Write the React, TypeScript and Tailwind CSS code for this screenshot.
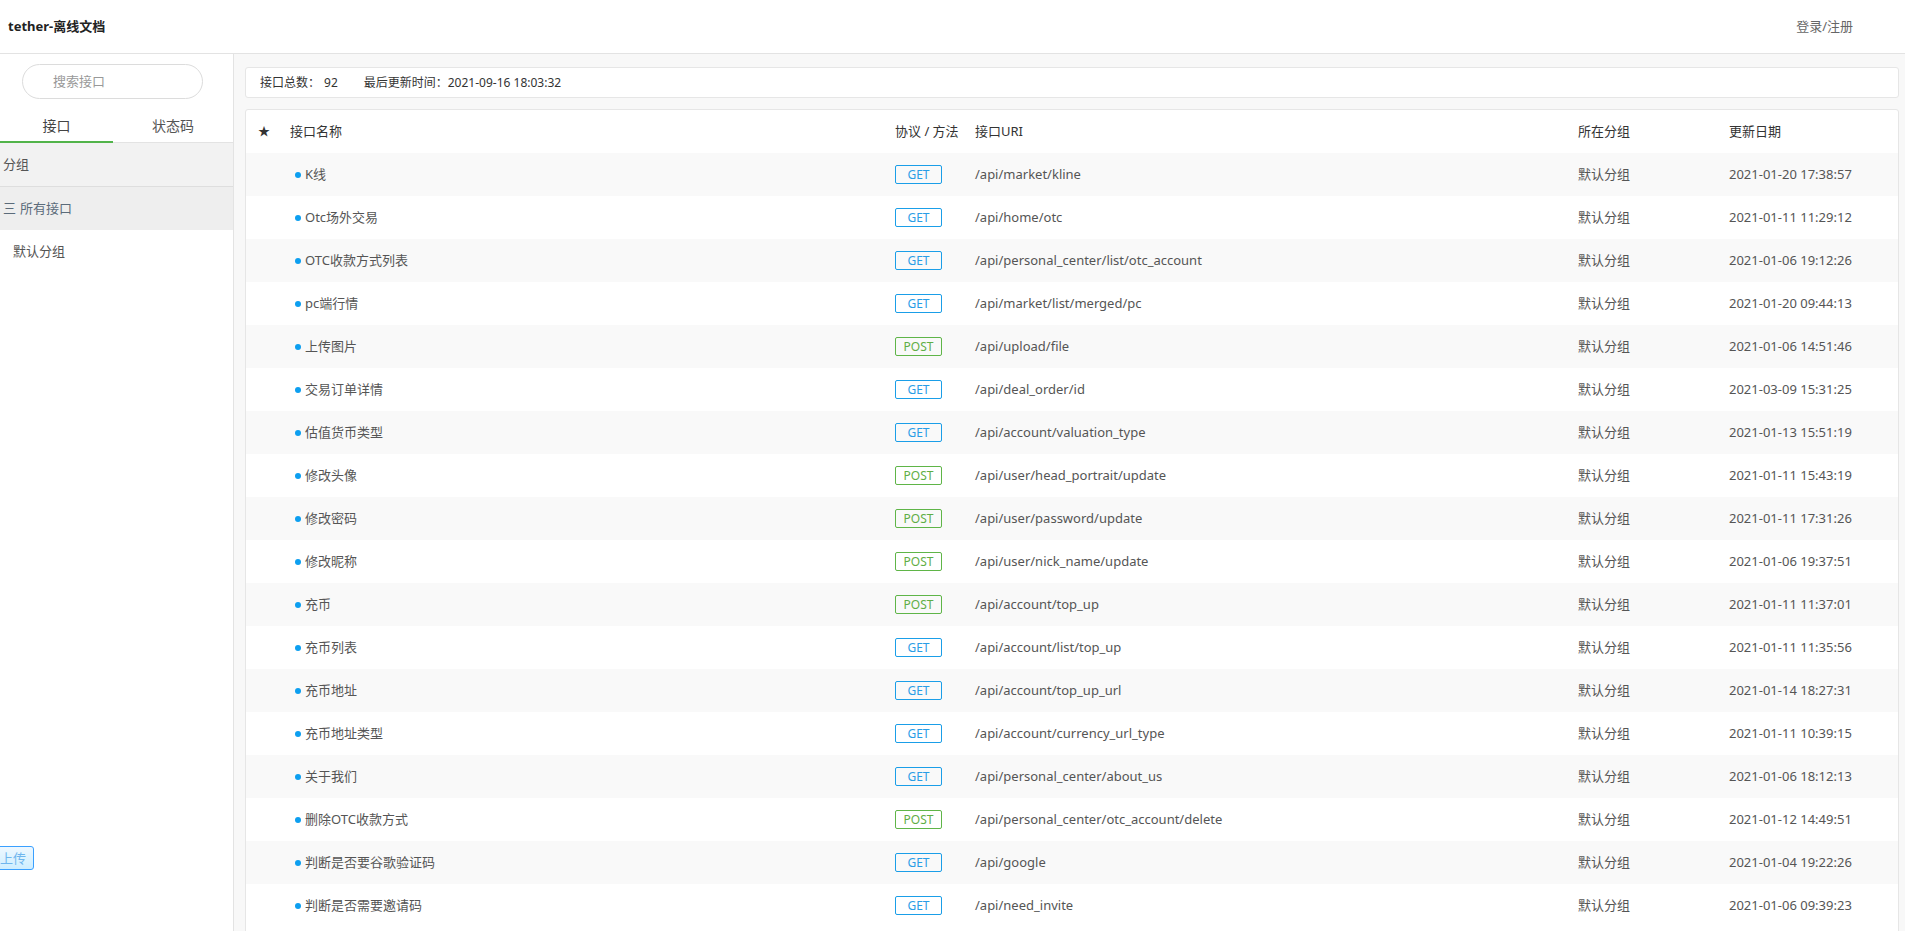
import React from 'react';

type Api = { name: string; method: 'GET' | 'POST'; uri: string; date: string };

const apis: Api[] = [
    { name: 'K线', method: 'GET', uri: '/api/market/kline', date: '2021-01-20 17:38:57' },
    { name: 'Otc场外交易', method: 'GET', uri: '/api/home/otc', date: '2021-01-11 11:29:12' },
    { name: 'OTC收款方式列表', method: 'GET', uri: '/api/personal_center/list/otc_account', date: '2021-01-06 19:12:26' },
    { name: 'pc端行情', method: 'GET', uri: '/api/market/list/merged/pc', date: '2021-01-20 09:44:13' },
    { name: '上传图片', method: 'POST', uri: '/api/upload/file', date: '2021-01-06 14:51:46' },
    { name: '交易订单详情', method: 'GET', uri: '/api/deal_order/id', date: '2021-03-09 15:31:25' },
    { name: '估值货币类型', method: 'GET', uri: '/api/account/valuation_type', date: '2021-01-13 15:51:19' },
    { name: '修改头像', method: 'POST', uri: '/api/user/head_portrait/update', date: '2021-01-11 15:43:19' },
    { name: '修改密码', method: 'POST', uri: '/api/user/password/update', date: '2021-01-11 17:31:26' },
    { name: '修改昵称', method: 'POST', uri: '/api/user/nick_name/update', date: '2021-01-06 19:37:51' },
    { name: '充币', method: 'POST', uri: '/api/account/top_up', date: '2021-01-11 11:37:01' },
    { name: '充币列表', method: 'GET', uri: '/api/account/list/top_up', date: '2021-01-11 11:35:56' },
    { name: '充币地址', method: 'GET', uri: '/api/account/top_up_url', date: '2021-01-14 18:27:31' },
    { name: '充币地址类型', method: 'GET', uri: '/api/account/currency_url_type', date: '2021-01-11 10:39:15' },
    { name: '关于我们', method: 'GET', uri: '/api/personal_center/about_us', date: '2021-01-06 18:12:13' },
    { name: '删除OTC收款方式', method: 'POST', uri: '/api/personal_center/otc_account/delete', date: '2021-01-12 14:49:51' },
    { name: '判断是否要谷歌验证码', method: 'GET', uri: '/api/google', date: '2021-01-04 19:22:26' },
    { name: '判断是否需要邀请码', method: 'GET', uri: '/api/need_invite', date: '2021-01-06 09:39:23' },
];

const cols = 'grid grid-cols-[44px_605px_80px_603px_151px_1fr] items-center';

const MethodBadge: React.FC<{ method: Api['method'] }> = ({ method }) => (
    <span
        className={`inline-flex items-center justify-center w-[47px] h-[19px] rounded-[2px] border text-[12px] leading-none ${
            method === 'GET' ? 'border-[#1a9ee8] text-[#2a9de6]' : 'border-[#5fb548] text-[#5fae45]'
        }`}
    >
        {method}
    </span>
);

const Sidebar: React.FC = () => (
    <aside className="w-[234px] shrink-0 bg-white border-r border-[#e3e3e3] flex flex-col overflow-hidden">
        {/* search */}
        <div className="pt-[10px] pl-[22px]">
            <div className="w-[181px] h-[35px] rounded-full border border-[#dcdcdc] flex items-center pl-[30px] text-[13px] text-[#999]">
                搜索接口
            </div>
        </div>

        {/* tabs */}
        <div className="mt-[10px] h-[34px] flex border-b border-[#e3e3e3] text-[14px]">
            <div className="w-[113px] flex items-center justify-center text-[#444] border-b-2 border-[#52b44b] -mb-px">接口</div>
            <div className="w-[120px] flex items-center justify-center text-[#555]">状态码</div>
        </div>

        <div className="h-[44px] flex items-center pl-[3px] bg-[#f2f2f2] border-b border-[#dedede] text-[13px] text-[#555]">分组</div>
        <div className="h-[43px] flex items-center pl-[3px] bg-[#eeeeee] text-[13px] text-[#5b6b7a]">
            <span className="mr-[4px]">三</span>所有接口
        </div>
        <div className="h-[43px] flex items-center pl-[13px] text-[13px] text-[#555]">默认分组</div>

        <div className="mt-auto mb-[61px]">
            <button className="-ml-[25px] h-[24px] pl-[24px] pr-[7px] rounded-[3px] border border-[#3aa0ff] bg-gradient-to-b from-[#eef8ff] to-[#cdeeff] text-[13px] text-[#6fb6ee] leading-none">
                上传
            </button>
        </div>
    </aside>
);

export default function App() {
    return (
        <div className="h-screen flex flex-col overflow-hidden bg-white font-['Noto_Sans','Noto_Sans_CJK_SC',sans-serif]">
            {/* Header */}
            <header className="h-[54px] shrink-0 flex items-center justify-between border-b border-[#e3e3e3] pl-[8px] pr-[52px]">
                <h1 className="text-[13px] font-bold text-[#222]">tether-离线文档</h1>
                <span className="text-[13px] text-[#666]">登录/注册</span>
            </header>

            <div className="flex flex-1 min-h-0">
                <Sidebar />

                <main className="flex-1 min-w-0 bg-[#f8f8f8] pt-[13px] pl-[11px] pr-[6px] overflow-hidden">
                    {/* summary */}
                    <div className="h-[31px] flex items-center bg-white border border-[#e6e6e6] rounded-[3px] pl-[14px] text-[12px] text-[#333]">
                        <span>接口总数：</span>
                        <span className="ml-[4px]">92</span>
                        <span className="ml-[26px]">最后更新时间：2021-09-16 18:03:32</span>
                    </div>

                    {/* table */}
                    <div className="mt-[11px] pb-[43px] bg-white border border-[#e6e6e6] rounded-[3px] text-[13px]">
                        <div className={`${cols} h-[43px] text-[#333]`}>
                            <span className="pl-[12px] text-[12px]">★</span>
                            <span>接口名称</span>
                            <span>协议 / 方法</span>
                            <span>接口URI</span>
                            <span>所在分组</span>
                            <span>更新日期</span>
                        </div>
                        {apis.map((a, i) => (
                            <div key={a.uri} className={`${cols} h-[43px] text-[#555] ${i % 2 === 0 ? 'bg-[#f9f9f9]' : 'bg-white'}`}>
                                <span />
                                <span className="flex items-center pl-[5px]">
                                    <span className="w-[6px] h-[6px] rounded-full bg-[#0d9ff0] mr-[4px]" />
                                    {a.name}
                                </span>
                                <span className="flex">
                                    <MethodBadge method={a.method} />
                                </span>
                                <span>{a.uri}</span>
                                <span>默认分组</span>
                                <span>{a.date}</span>
                            </div>
                        ))}
                    </div>
                </main>
            </div>
        </div>
    );
}
